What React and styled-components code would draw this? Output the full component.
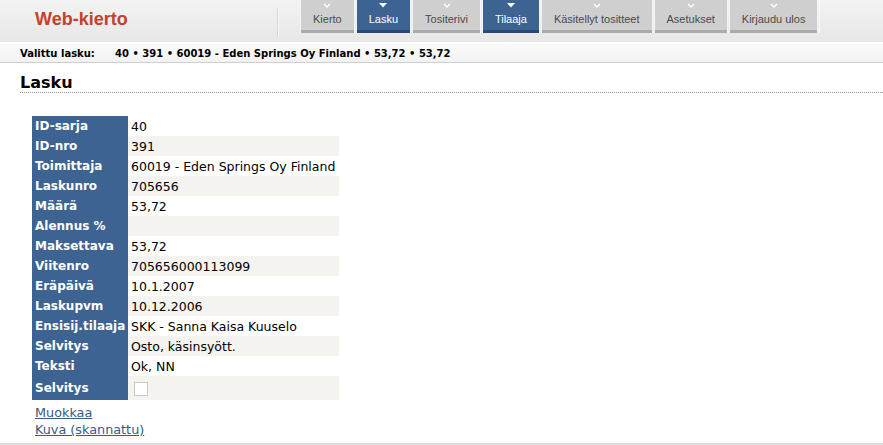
import React from "react";
import styled, { createGlobalStyle } from "styled-components";

const Global = createGlobalStyle`
  html, body {
    margin: 0;
    padding: 0;
    background: #fff;
  }
  body {
    font-family: "DejaVu Sans", Verdana, sans-serif;
    color: #000;
  }
`;

const Page = styled.div`
  width: 883px;
  height: 445px;
  overflow: hidden;
  border-bottom: 2px solid #dedede;
  box-sizing: border-box;
`;

const Header = styled.header`
  height: 42px;
  display: flex;
  align-items: flex-start;
  background: linear-gradient(#f3f3f3, #e7e7e7);
  border-bottom: 2px solid #fff;
`;

const Logo = styled.div`
  width: 242px;
  height: 28px;
  margin: 8px 0 0 0;
  padding-left: 35px;
  border-right: 1px solid #d4d4d4;
  box-shadow: 1px 0 0 #fafafa;
  font-family: "Liberation Sans", Arial, sans-serif;
  font-weight: bold;
  font-size: 18px;
  line-height: 22px;
  color: #c5412b;
`;

const Tabs = styled.nav`
  display: flex;
  gap: 3px;
  margin-left: 23px;
  padding-right: 2px;
  border-right: 1px solid #fafafa;
`;

const Tab = styled.div`
  position: relative;
  height: 22px;
  padding: 8px 12px 0;
  display: flex;
  align-items: center;
  box-sizing: content-box;
  font-family: "Liberation Sans", Arial, sans-serif;
  font-size: 11px;
  color: ${(p) => (p.active ? "#fff" : "#4a4a4a")};
  background: ${(p) => (p.active ? "#3d6392" : "#cfcfcf")};
  border-bottom: 3px solid ${(p) => (p.active ? "#2b4a72" : "#ababab")};
  box-shadow: 1px 0 0 #f4f4f4, -1px 0 0 #f4f4f4;

  svg {
    position: absolute;
    top: 3px;
    left: 50%;
    margin-left: -4px;
  }
`;

const InfoBar = styled.div`
  height: 18px;
  display: flex;
  align-items: center;
  padding-left: 20px;
  background: linear-gradient(#fafafa, #f2f2f2);
  border-bottom: 1px solid #cfcfcf;
  font-size: 10px;
  font-weight: bold;
`;

const InfoLabel = styled.span`
  width: 95px;
`;

const Content = styled.main`
  padding: 11px 0 0 20px;
`;

const Title = styled.h1`
  margin: 0;
  font-size: 16px;
  line-height: 18px;
  font-weight: bold;
  border-bottom: 1px dotted #999;
`;

const Table = styled.table`
  margin: 23px 0 0 12px;
  border-collapse: collapse;
  width: 307px;
  font-size: 12px;
`;

const Row = styled.tr`
  height: ${(p) => (p.tall ? "24px" : "20px")};
  background: ${(p) => (p.shaded ? "#f4f3ef" : "#fff")};
`;

const Label = styled.th`
  width: 93px;
  padding: 0 0 0 3px;
  background: #3d6392;
  color: #fff;
  text-align: left;
  font-weight: bold;
  white-space: nowrap;
`;

const Value = styled.td`
  padding: 0 0 0 3px;
  font-size: 12.5px;
  white-space: nowrap;
`;

const Check = styled.span`
  display: inline-block;
  width: 12px;
  height: 12px;
  margin: 2px 0 0 3px;
  border: 1px solid #c9c9c9;
  background: #fff;
  vertical-align: middle;
`;

const Links = styled.div`
  display: flex;
  flex-direction: column;
  margin: 4px 0 0 15px;
  font-size: 12.8px;
  line-height: 17px;
`;

const Link = styled.a`
  color: #3b5985;
  text-decoration: underline;
`;

const Chevron = () => (
  <svg width="8" height="5" viewBox="0 0 8 5">
    <path d="M1 1 L4 4 L7 1" fill="none" stroke="#fff" strokeWidth="1.4" />
  </svg>
);

const Triangle = () => (
  <svg width="8" height="5" viewBox="0 0 8 5">
    <path d="M0 0 H8 L4 4.5 Z" fill="#fff" />
  </svg>
);

const tabs = [
  ["Kierto", false],
  ["Lasku", true],
  ["Tositerivi", false],
  ["Tilaaja", true],
  ["Käsitellyt tositteet", false],
  ["Asetukset", false],
  ["Kirjaudu ulos", false],
];

const rows = [
  ["ID-sarja", "40"],
  ["ID-nro", "391"],
  ["Toimittaja", "60019 - Eden Springs Oy Finland"],
  ["Laskunro", "705656"],
  ["Määrä", "53,72"],
  ["Alennus %", ""],
  ["Maksettava", "53,72"],
  ["Viitenro", "705656000113099"],
  ["Eräpäivä", "10.1.2007"],
  ["Laskupvm", "10.12.2006"],
  ["Ensisij.tilaaja", "SKK - Sanna Kaisa Kuuselo"],
  ["Selvitys", "Osto, käsinsyött."],
  ["Teksti", "Ok, NN"],
];

export default function App() {
  return (
    <Page>
      <Global />
      <Header>
        <Logo>Web-kierto</Logo>
        <Tabs>
          {tabs.map(([name, active]) => (
            <Tab key={name} active={active}>
              {active ? <Triangle /> : <Chevron />}
              {name}
            </Tab>
          ))}
        </Tabs>
      </Header>
      <InfoBar>
        <InfoLabel>Valittu lasku:</InfoLabel>
        <span>40 • 391 • 60019 - Eden Springs Oy Finland • 53,72 • 53,72</span>
      </InfoBar>
      <Content>
        <Title>Lasku</Title>
        <Table>
          <tbody>
            {rows.map(([label, value], i) => (
              <Row key={label + i} shaded={i % 2 === 1}>
                <Label>{label}</Label>
                <Value>{value}</Value>
              </Row>
            ))}
            <Row tall shaded>
              <Label>Selvitys</Label>
              <Value>
                <Check />
              </Value>
            </Row>
          </tbody>
        </Table>
        <Links>
          <Link href="#">Muokkaa</Link>
          <Link href="#">Kuva (skannattu)</Link>
        </Links>
      </Content>
    </Page>
  );
}
